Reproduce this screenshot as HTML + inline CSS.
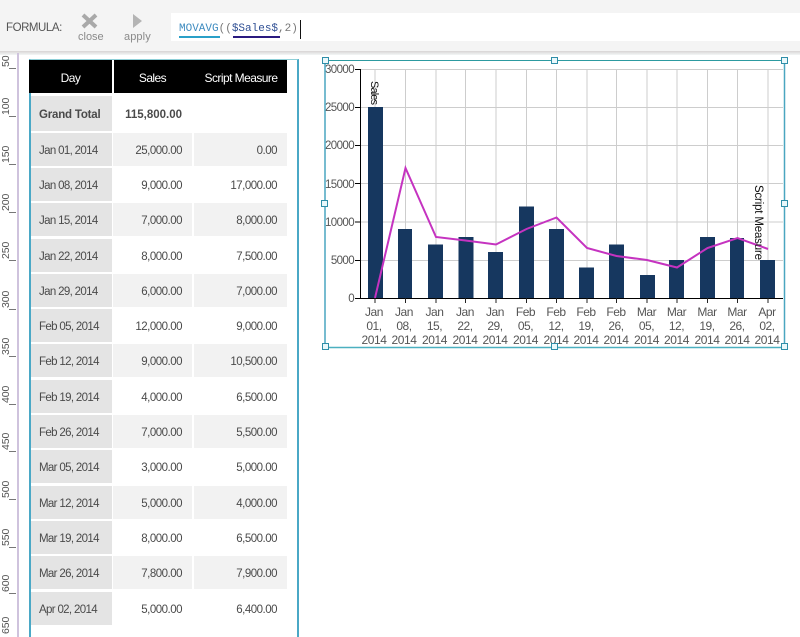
<!DOCTYPE html>
<html><head><meta charset="utf-8"><style>
html,body{margin:0;padding:0;background:#fff}
body{width:800px;height:637px;overflow:hidden;position:relative;font-family:"Liberation Sans",sans-serif;font-size:11.5px;letter-spacing:-.5px;color:#4a4a4a}
.a{position:absolute}
.r{position:absolute;left:31px;width:256px;height:33px;line-height:37px}
.r div{position:absolute;top:0;height:33px;box-sizing:border-box;white-space:nowrap;overflow:hidden}
.c1{left:0;width:81px;background:#e4e4e4;padding-left:8px;letter-spacing:-.66px}
.c2{left:82px;width:79px;text-align:right;padding-right:10px}
.c3{left:163px;width:93px;text-align:right;padding-right:10px}
.s .c2,.s .c3{background:#f2f2f2}
.h{position:absolute;top:60px;height:33px;line-height:36px;color:#fff;background:#000;text-align:center;font-size:12px;letter-spacing:-.55px;overflow:hidden}
</style></head><body>
<div class="a" style="left:0;top:0;width:800px;height:51px;background:#f4f4f4"></div>
<div class="a" style="left:0;top:51px;width:800px;height:4px;background:linear-gradient(#d8d4d4,#f4f6f6)"></div>
<div class="a" style="left:171px;top:13px;width:629px;height:28px;background:#fff"></div>
<div class="a" style="left:6px;top:21px;font-size:11.5px;letter-spacing:-.45px;line-height:14px;color:#555">FORMULA:</div>
<svg class="a" style="left:78px;top:10px" width="80" height="20"><path d="M5 5 L18 17 M18 5 L5 17" stroke="#a9a9a9" stroke-width="4" fill="none"/><path d="M55 4 L64 11 L55 18 Z" fill="#b4b4b4"/></svg>
<div class="a" style="left:78px;top:30px;font-size:11px;letter-spacing:0;line-height:14px;color:#8a8a8a">close</div>
<div class="a" style="left:124px;top:30px;font-size:11px;letter-spacing:.1px;line-height:14px;color:#8a8a8a">apply</div>
<div class="a" style="left:179px;top:23px;font-family:'Liberation Mono',monospace;font-size:11px;letter-spacing:0;line-height:13px;color:#777;white-space:pre"><span style="color:#3f8cc0">MOVAVG</span>((<span style="color:#2f4f94">$Sales$</span>,2)</div>
<div class="a" style="left:179px;top:36px;width:41px;height:2px;background:#2aa0c8"></div>
<div class="a" style="left:233px;top:36px;width:47px;height:2px;background:#2a1a80"></div>
<div class="a" style="left:300px;top:20px;width:1px;height:19px;background:#111"></div>

<div class="a" style="left:17px;top:53px;width:2px;height:584px;background:#cfc3dd"></div>
<svg class="a" style="left:0;top:50px" width="17" height="587" font-family="Liberation Sans" font-size="10.5" fill="#555" letter-spacing="-.1">
<g stroke="#777" stroke-width="1"><path d="M9 18.500H16M9 66.500H16M9 114.500H16M9 162.500H16M9 210.500H16M9 259.500H16M9 306.500H16M9 354.500H16M9 401.500H16M9 449.500H16M9 497.500H16M9 543.500H16"/></g>
<text transform="translate(9,17) rotate(-90)">50</text>
<text transform="translate(9,65) rotate(-90)">100</text>
<text transform="translate(9,113) rotate(-90)">150</text>
<text transform="translate(9,161) rotate(-90)">200</text>
<text transform="translate(9,209) rotate(-90)">250</text>
<text transform="translate(9,258) rotate(-90)">300</text>
<text transform="translate(9,305) rotate(-90)">350</text>
<text transform="translate(9,353) rotate(-90)">400</text>
<text transform="translate(9,400) rotate(-90)">450</text>
<text transform="translate(9,448) rotate(-90)">500</text>
<text transform="translate(9,496) rotate(-90)">550</text>
<text transform="translate(9,542) rotate(-90)">600</text>
<text transform="translate(9,584) rotate(-90)">650</text>
</svg>

<div class="a" style="left:29px;top:59px;width:270px;height:578px;box-sizing:border-box;border:2px solid #4aa8c6;border-bottom:0;border-top:1px solid #8fd0d8"></div>
<div class="h" style="left:29px;width:83px">Day</div>
<div class="h" style="left:114px;width:77px">Sales</div>
<div class="h" style="left:191px;width:96px;padding-left:4px;box-sizing:border-box">Script Measure</div>

<div class="r" style="top:96px;height:35px;line-height:38px;font-weight:bold;letter-spacing:-.2px"><div class="c1" style="height:35px;letter-spacing:-.2px">Grand Total</div><div class="c2" style="height:35px;letter-spacing:0">115,800.00</div></div>
<div class="r s" style="top:133px"><div class="c1">Jan 01, 2014</div><div class="c2">25,000.00</div><div class="c3">0.00</div></div>
<div class="r" style="top:168px"><div class="c1">Jan 08, 2014</div><div class="c2">9,000.00</div><div class="c3">17,000.00</div></div>
<div class="r s" style="top:203px"><div class="c1">Jan 15, 2014</div><div class="c2">7,000.00</div><div class="c3">8,000.00</div></div>
<div class="r" style="top:239px"><div class="c1">Jan 22, 2014</div><div class="c2">8,000.00</div><div class="c3">7,500.00</div></div>
<div class="r s" style="top:274px"><div class="c1">Jan 29, 2014</div><div class="c2">6,000.00</div><div class="c3">7,000.00</div></div>
<div class="r" style="top:309px"><div class="c1">Feb 05, 2014</div><div class="c2">12,000.00</div><div class="c3">9,000.00</div></div>
<div class="r s" style="top:344px"><div class="c1">Feb 12, 2014</div><div class="c2">9,000.00</div><div class="c3">10,500.00</div></div>
<div class="r" style="top:380px"><div class="c1">Feb 19, 2014</div><div class="c2">4,000.00</div><div class="c3">6,500.00</div></div>
<div class="r s" style="top:415px"><div class="c1">Feb 26, 2014</div><div class="c2">7,000.00</div><div class="c3">5,500.00</div></div>
<div class="r" style="top:450px"><div class="c1">Mar 05, 2014</div><div class="c2">3,000.00</div><div class="c3">5,000.00</div></div>
<div class="r s" style="top:486px"><div class="c1">Mar 12, 2014</div><div class="c2">5,000.00</div><div class="c3">4,000.00</div></div>
<div class="r" style="top:521px"><div class="c1">Mar 19, 2014</div><div class="c2">8,000.00</div><div class="c3">6,500.00</div></div>
<div class="r s" style="top:556px"><div class="c1">Mar 26, 2014</div><div class="c2">7,800.00</div><div class="c3">7,900.00</div></div>
<div class="r" style="top:592px"><div class="c1">Apr 02, 2014</div><div class="c2">5,000.00</div><div class="c3">6,400.00</div></div>

<svg class="a" style="left:320px;top:55px;letter-spacing:0" width="480" height="300" viewBox="320 55 480 300" font-family="Liberation Sans" font-size="12" fill="#555">
<path d="M360 69.500H783M360 107.500H783M360 145.500H783M360 183.500H783M360 222H783M360 260.500H783" stroke="#cdcdcd" fill="none"/>
<path d="M375 69V298M405.500 69V298M436 69V298M465.500 69V298M496 69V298M526.500 69V298M556.500 69V298M587 69V298M616.500 69V298M647 69V298M677 69V298M707.500 69V298M737.500 69V298M768 69V298" stroke="#cdcdcd" fill="none"/>
<g fill="#16375f">
<rect x="368" y="107" width="15" height="191"/>
<rect x="398" y="229" width="14" height="69"/>
<rect x="428" y="244.500" width="15" height="53.500"/>
<rect x="458.500" y="237" width="15" height="61"/>
<rect x="488" y="252" width="15" height="46"/>
<rect x="519" y="206.500" width="15" height="91.500"/>
<rect x="549" y="229" width="15" height="69"/>
<rect x="579" y="267.500" width="15" height="30.500"/>
<rect x="609" y="244.500" width="15" height="53.500"/>
<rect x="640" y="275" width="15" height="23"/>
<rect x="669" y="260" width="15" height="38"/>
<rect x="700" y="237" width="15" height="61"/>
<rect x="730" y="238" width="14" height="60"/>
<rect x="760" y="260" width="15" height="38"/>
</g>
<polyline points="375,298 405.500,168 436,237 465.500,240.500 496,244.500 526.500,229 556.500,217.500 587,248 616.500,256 647,260 677,267.500 707.500,248 737.500,238 768,249" fill="none" stroke="#c533c0" stroke-width="2"/>
<path d="M360.500 69V298.500M355 69.500H360M355 107.500H360M355 145.500H360M355 183.500H360M355 222H360M355 260.500H360M355 298.500H783" stroke="#000" fill="none"/>
<path d="M375 298V303M405.500 298V303M436 298V303M465.500 298V303M496 298V303M526.500 298V303M556.500 298V303M587 298V303M616.500 298V303M647 298V303M677 298V303M707.500 298V303M737.500 298V303M768 298V303" stroke="#222" fill="none"/>
<g text-anchor="end" font-size="11.5" letter-spacing="-.6"><text x="354" y="73">30000</text><text x="354" y="111">25000</text><text x="354" y="149">20000</text><text x="354" y="188">15000</text><text x="354" y="226">10000</text><text x="354" y="264">5000</text><text x="354" y="302">0</text></g>
<g text-anchor="middle" letter-spacing="-.45">
<text x="374" y="316">Jan</text><text x="374" y="330">01,</text><text x="374" y="344">2014</text>
<text x="404" y="316">Jan</text><text x="404" y="330">08,</text><text x="404" y="344">2014</text>
<text x="434.500" y="316">Jan</text><text x="434.500" y="330">15,</text><text x="434.500" y="344">2014</text>
<text x="465" y="316">Jan</text><text x="465" y="330">22,</text><text x="465" y="344">2014</text>
<text x="495" y="316">Jan</text><text x="495" y="330">29,</text><text x="495" y="344">2014</text>
<text x="525.500" y="316">Feb</text><text x="525.500" y="330">05,</text><text x="525.500" y="344">2014</text>
<text x="556" y="316">Feb</text><text x="556" y="330">12,</text><text x="556" y="344">2014</text>
<text x="586" y="316">Feb</text><text x="586" y="330">19,</text><text x="586" y="344">2014</text>
<text x="616" y="316">Feb</text><text x="616" y="330">26,</text><text x="616" y="344">2014</text>
<text x="646.500" y="316">Mar</text><text x="646.500" y="330">05,</text><text x="646.500" y="344">2014</text>
<text x="676.500" y="316">Mar</text><text x="676.500" y="330">12,</text><text x="676.500" y="344">2014</text>
<text x="707" y="316">Mar</text><text x="707" y="330">19,</text><text x="707" y="344">2014</text>
<text x="737" y="316">Mar</text><text x="737" y="330">26,</text><text x="737" y="344">2014</text>
<text x="767" y="316">Apr</text><text x="767" y="330">02,</text><text x="767" y="344">2014</text>
</g>
<text transform="translate(371,81) rotate(90)" fill="#111" font-size="11" textLength="24">Sales</text>
<text transform="translate(755,185) rotate(90)" fill="#111" font-size="11.500" textLength="75">Script Measure</text>
<path d="M325 60.500H784" stroke="#2c9aa0" fill="none"/>
<path d="M325 347.500H784" stroke="#4bb0c0" stroke-width="1.500" fill="none"/>
<path d="M325 60V347M784.500 60V347" stroke="#4aa6c0" stroke-width="1.500" fill="none"/>
<g fill="#eaf8fb" stroke="#2f8ea8">
<rect x="322.500" y="57.500" width="6" height="6"/><rect x="551.500" y="57.500" width="6" height="6"/><rect x="781.500" y="57.500" width="6" height="6"/>
<rect x="321.500" y="200.500" width="6" height="6"/><rect x="781.500" y="200.500" width="6" height="6"/>
<rect x="322.500" y="343.500" width="6" height="6"/><rect x="551.500" y="343.500" width="6" height="6"/><rect x="781.500" y="343.500" width="6" height="6"/>
</g>
</svg>
</body></html>
